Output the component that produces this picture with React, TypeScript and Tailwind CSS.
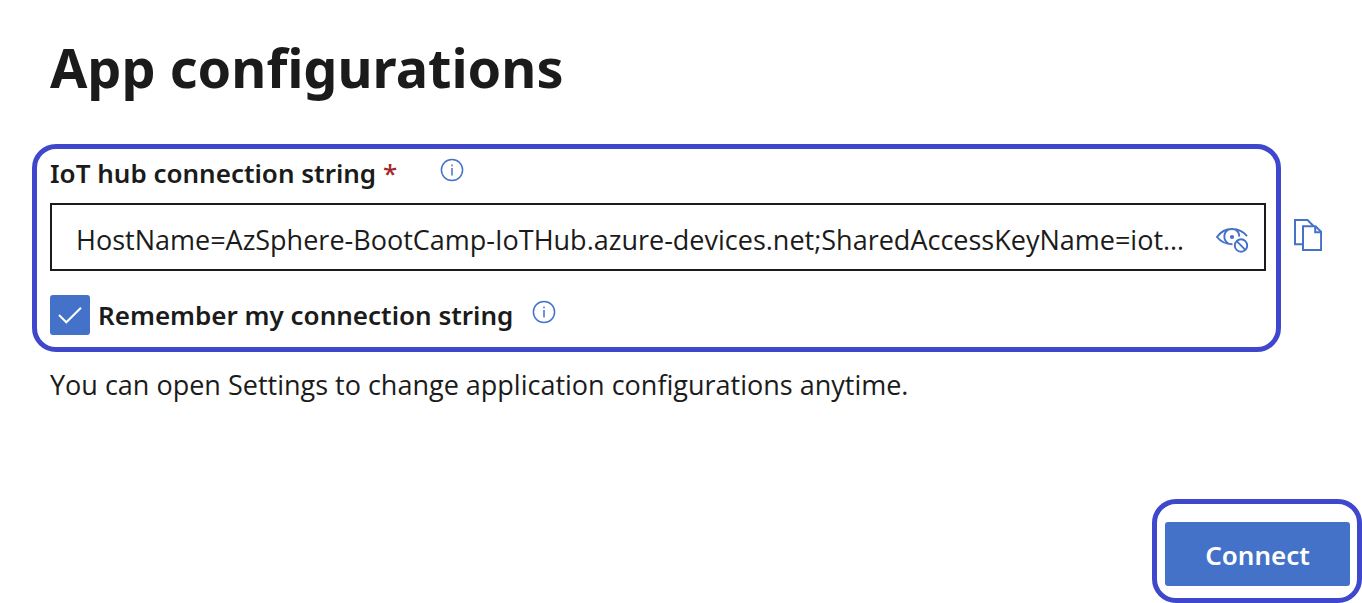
import React, { useState } from "react";

function InfoIcon() {
  return (
    <svg viewBox="0 0 24 24" className="size-6" fill="none" stroke="#4472c8" strokeWidth="1.5" aria-hidden="true">
      <circle cx="12" cy="12" r="10.6" />
      <path d="M12 10v7.5M12 6.5v1.8" />
    </svg>
  );
}

function HideIcon() {
  return (
    <svg viewBox="0 0 32 26" className="h-[26px] w-8" fill="none" stroke="#4472c8" strokeWidth="1.9" aria-hidden="true">
      <path d="M31 9.2C27.5 4.600 22 2 16 2S4.500 5 1 10c3.500 4.500 8.500 7.200 15.500 7.200" />
      <path d="M12.300 2.600a8 8 0 0 0 0 13.800M19.500 2.600a8 8 0 0 1 3.700 7" />
      <circle cx="16" cy="10" r="2.100" fill="#4472c8" stroke="none" />
      <circle cx="25" cy="18.500" r="6.200" />
      <path d="m20.700 14.200 8.600 8.600" />
    </svg>
  );
}

function CopyIcon() {
  return (
    <svg viewBox="0 0 28 32" className="h-8 w-7" fill="none" stroke="#4472c8" strokeWidth="2" aria-hidden="true">
      <path d="M8.500 25.200H1V1h12.500l6 6" />
      <path d="M9 7.200h12.500l5.600 5.600V31H9z" />
      <path d="M21.200 7.200v6h6" />
    </svg>
  );
}

export default function App() {
  const [value, setValue] = useState(
    "HostName=AzSphere-BootCamp-IoTHub.azure-devices.net;SharedAccessKeyName=iothubowner"
  );
  const [remember, setRemember] = useState(true);
  return (
    <main className="bg-white pt-8 text-[26px] text-[#1b1b1b] font-['Noto_Sans','Open_Sans',sans-serif]">
      <h1 className="pl-[50px] text-[54px] leading-[70px] font-bold">App configurations</h1>
      <div className="mt-[42px] flex items-center gap-[13px] pl-8 pr-10">
        <section className="min-w-0 flex-1 rounded-3xl border-[5px] border-[#3f48cc] pr-[10px] pb-3 pl-[13px]">
          <div className="flex h-[54px] items-start pt-2">
            <label htmlFor="conn" className="leading-8 font-semibold">
              IoT hub connection string <span className="font-medium text-[#a4262c]">*</span>
            </label>
            <button type="button" aria-label="About the connection string" className="ml-[43px] pt-px">
              <InfoIcon />
            </button>
          </div>
          <div className="flex h-[68px] items-center border-2 border-[#1b1b1b] pl-6 pr-4">
            <input
              id="conn"
              type="text"
              value={value}
              onChange={(e) => setValue(e.target.value)}
              className="mr-6 h-full min-w-0 flex-1 pt-1 text-[27px] font-['Open_Sans','Noto_Sans',sans-serif] text-ellipsis outline-none"
            />
            <button type="button" aria-label="Hide connection string" className="pt-1.5">
              <HideIcon />
            </button>
          </div>
          <div className="mt-6 flex h-10 items-center">
            <span className="grid size-10">
              <input
                id="remember"
                type="checkbox"
                checked={remember}
                onChange={(e) => setRemember(e.target.checked)}
                className="col-start-1 row-start-1 size-10 appearance-none rounded-[3px] border-2 border-[#4472c8] checked:bg-[#4472c8]"
              />
              <svg viewBox="0 0 40 40" className="pointer-events-none col-start-1 row-start-1 size-10" fill="none" stroke="#fff" strokeWidth="2" aria-hidden="true">
                <path d="m9 20 7.300 7.300L31 12.700" />
              </svg>
            </span>
            <label htmlFor="remember" className="ml-2 font-semibold">
              Remember my connection string
            </label>
            <button type="button" aria-label="About remembering the connection string" className="ml-[19px] pb-1.5">
              <InfoIcon />
            </button>
          </div>
        </section>
        <button type="button" aria-label="Copy connection string" className="pb-[26px]">
          <CopyIcon />
        </button>
      </div>
      <p className="mt-[13px] pl-[50px] text-[27px] leading-10 font-['Open_Sans','Noto_Sans',sans-serif]">
        You can open Settings to change application configurations anytime.
      </p>
      <div className="mt-[94px] flex justify-end">
        <div className="rounded-3xl border-[5px] border-[#3f48cc] pt-[18px] pr-[7px] pb-3 pl-2">
          <button type="button" className="h-16 w-[185px] rounded-[3px] bg-[#4472c8] pt-0.5 font-semibold text-white">
            Connect
          </button>
        </div>
      </div>
    </main>
  );
}
